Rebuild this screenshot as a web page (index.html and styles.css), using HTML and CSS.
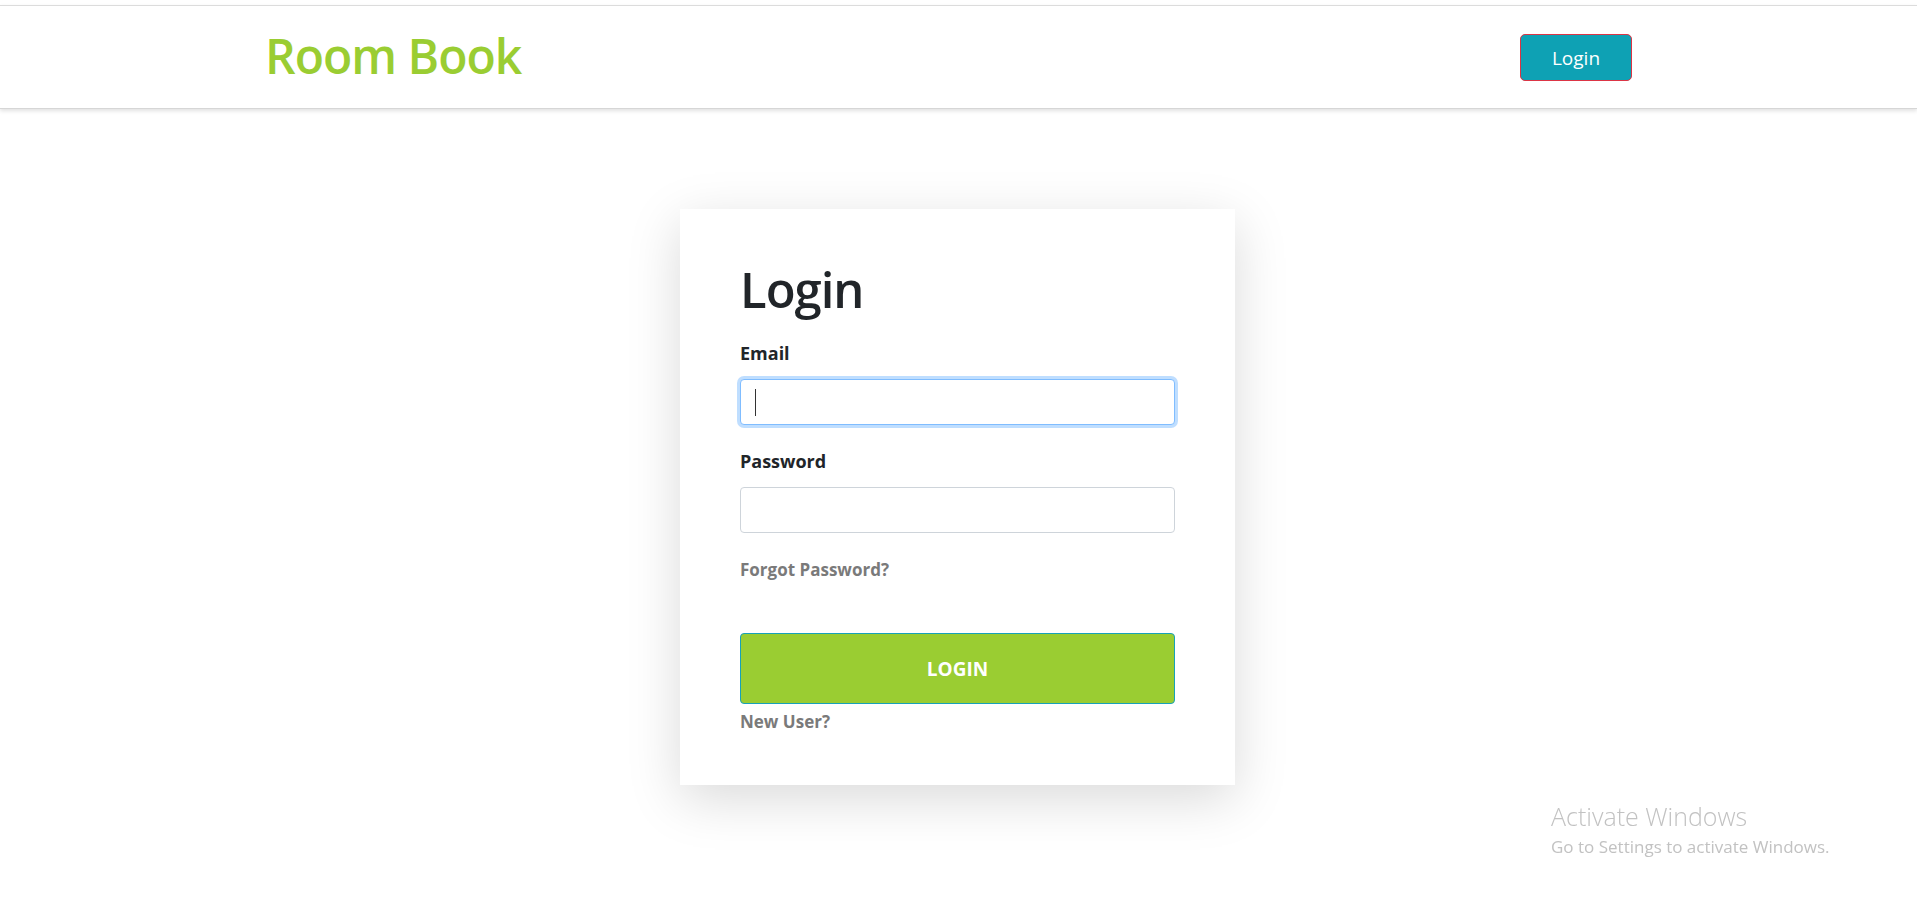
FILE: index.html
```html
<!DOCTYPE html>
<html lang="en">
<head>
<meta charset="utf-8">
<title>Room Book - Login</title>
<link rel="stylesheet" href="styles.css">
</head>
<body>
<header class="topbar">
  <a class="brand" href="#">Room Book</a>
  <button class="btn-nav" type="button">Login</button>
</header>

<main class="page">
  <form class="card">
    <h1 class="card-title">Login</h1>
    <label class="field-label" for="email">Email</label>
    <div class="input-wrap">
      <input class="field-input is-focused" id="email" type="email">
      <span class="caret"></span>
    </div>
    <label class="field-label" for="password">Password</label>
    <div class="input-wrap">
      <input class="field-input" id="password" type="password">
    </div>
    <a class="muted-link forgot" href="#">Forgot Password?</a>
    <button class="btn-submit" type="button">LOGIN</button>
    <a class="muted-link newuser" href="#">New User?</a>
  </form>
</main>

<div class="watermark">
  <div class="wm-title">Activate Windows</div>
  <div class="wm-sub">Go to Settings to activate Windows.</div>
</div>
</body>
</html>
```

FILE: styles.css
```css
* { box-sizing: border-box; }

html, body {
  margin: 0;
  padding: 0;
  background: #ffffff;
  font-family: "Open Sans", "Noto Sans", sans-serif;
  color: #212529;
}

body {
  min-height: 100vh;
}

.topbar {
  margin-top: 5px;
  height: 104px;
  border-top: 1px solid #dcdcdc;
  border-bottom: 1px solid #d6d6d6;
  box-shadow: 0 2px 4px rgba(0, 0, 0, 0.12);
  display: flex;
  align-items: center;
  padding: 0 285px 0 265px;
  background: #fff;
}

.brand {
  font-size: 48px;
  line-height: 1.2;
  font-weight: 600;
  color: #9acd32;
  text-decoration: none;
  margin-bottom: 3px;
  letter-spacing: -1px;
}

.btn-nav {
  margin-left: auto;
  margin-top: 1px;
  width: 112px;
  height: 47px;
  background: #0ea1b4;
  border: 1px solid #dc3545;
  border-radius: 5px;
  color: #fff;
  font-family: "Open Sans", "Noto Sans", sans-serif;
  font-size: 19px;
  padding: 0;
}

.page {
  display: flex;
  justify-content: center;
  padding: 100px 2px 0 0;
}

.card {
  width: 555px;
  background: #fff;
  padding: 50px 60px 51px;
  box-shadow: 0 14px 50px rgba(0, 0, 0, 0.15);
  display: flex;
  flex-direction: column;
}

.card-title {
  margin: 0 0 21px;
  font-size: 49px;
  line-height: 60px;
  font-weight: 600;
  color: #212529;
  letter-spacing: -1px;
}

.field-label {
  font-size: 18px;
  line-height: 27px;
  font-weight: 700;
  margin-bottom: 12px;
  color: #212529;
}

.input-wrap {
  position: relative;
  margin-bottom: 23px;
}

.field-input {
  display: block;
  width: 100%;
  height: 46px;
  border: 1px solid #ced4da;
  border-radius: 4px;
  padding: 6px 12px;
  font-size: 16px;
  outline: none;
  background: #fff;
}

.field-input.is-focused {
  border-color: #80bdff;
  box-shadow: 0 0 0 3px rgba(0, 123, 255, 0.25);
}

.caret {
  position: absolute;
  left: 15px;
  top: 10px;
  width: 1px;
  height: 27px;
  background: #333;
}

.muted-link {
  font-size: 17px;
  line-height: 24px;
  font-weight: 700;
  color: #7a7a7a;
  text-decoration: none;
}

.forgot {
  margin-top: 2px;
  align-self: flex-start;
}

.btn-submit {
  margin-top: 51px;
  height: 71px;
  width: 100%;
  background: #9acd32;
  border: 1px solid #17a2b8;
  border-radius: 4px;
  color: #fff;
  font-family: "Open Sans", "Noto Sans", sans-serif;
  font-size: 19px;
  font-weight: 700;
}

.newuser {
  margin-top: 6px;
  align-self: flex-start;
}

.watermark {
  position: fixed;
  left: 1551px;
  top: 800px;
  color: #c2c2c2;
  font-family: "Open Sans", "Noto Sans", sans-serif;
}

.wm-title {
  font-size: 25px;
  line-height: 32px;
  font-weight: 300;
}

.wm-sub {
  font-size: 17px;
  line-height: 26px;
  margin-top: 2px;
  font-weight: 400;
}
```
